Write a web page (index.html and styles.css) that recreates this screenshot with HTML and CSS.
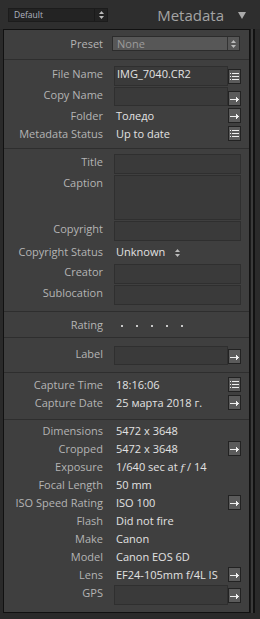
FILE: index.html
```html
<!DOCTYPE html>
<html lang="en">
<head>
    <meta charset="UTF-8">
    <meta name="viewport" content="width=device-width, initial-scale=1.0">
    <title>Metadata</title>
    <link rel="stylesheet" href="styles.css">
</head>
<body>
    <div class="header">
        <div class="mini-select">
            <span class="mini-text">Default</span>
            <span class="mini-spin"><i class="spin"></i></span>
        </div>
        <div class="title">Metadata</div>
        <div class="collapse"></div>
    </div>

    <div class="frame">
        <div class="panel">
            <div class="group g-preset">
                <div class="row">
                    <div class="label">Preset</div>
                    <div class="preset-select">
                        <span class="preset-text">None</span>
                        <span class="preset-spin"><i class="spin"></i></span>
                    </div>
                </div>
            </div>

            <div class="group g-file">
                <div class="row box-row">
                    <div class="label">File Name</div>
                    <div class="box short">IMG_7040.CR2</div>
                    <button class="btn list"></button>
                </div>
                <div class="row box-row copy">
                    <div class="label">Copy Name</div>
                    <div class="box short"></div>
                    <button class="btn arrow"></button>
                </div>
                <div class="row">
                    <div class="label">Folder</div>
                    <div class="value">Толедо</div>
                    <button class="btn arrow"></button>
                </div>
                <div class="row">
                    <div class="label">Metadata Status</div>
                    <div class="value">Up to date</div>
                    <button class="btn list"></button>
                </div>
            </div>

            <div class="group g-text">
                <div class="row box-row">
                    <div class="label">Title</div>
                    <div class="box"></div>
                </div>
                <div class="row box-row caption">
                    <div class="label">Caption</div>
                    <div class="box"></div>
                </div>
                <div class="row box-row">
                    <div class="label">Copyright</div>
                    <div class="box"></div>
                </div>
                <div class="row status-row">
                    <div class="label">Copyright Status</div>
                    <div class="value">Unknown <i class="spin"></i></div>
                </div>
                <div class="row box-row creator">
                    <div class="label">Creator</div>
                    <div class="box"></div>
                </div>
                <div class="row box-row">
                    <div class="label">Sublocation</div>
                    <div class="box"></div>
                </div>
            </div>

            <div class="group g-rating">
                <div class="row">
                    <div class="label">Rating</div>
                    <div class="stars">
                        <span></span><span></span><span></span><span></span><span></span>
                    </div>
                </div>
            </div>

            <div class="group g-label">
                <div class="row box-row">
                    <div class="label">Label</div>
                    <div class="box short"></div>
                    <button class="btn arrow"></button>
                </div>
            </div>

            <div class="group g-capture">
                <div class="row">
                    <div class="label">Capture Time</div>
                    <div class="value">18:16:06</div>
                    <button class="btn list"></button>
                </div>
                <div class="row">
                    <div class="label">Capture Date</div>
                    <div class="value">25 марта 2018 г.</div>
                    <button class="btn arrow"></button>
                </div>
            </div>

            <div class="group g-exif">
                <div class="row">
                    <div class="label">Dimensions</div>
                    <div class="value">5472 x 3648</div>
                </div>
                <div class="row">
                    <div class="label">Cropped</div>
                    <div class="value">5472 x 3648</div>
                    <button class="btn arrow"></button>
                </div>
                <div class="row">
                    <div class="label">Exposure</div>
                    <div class="value">1/640 sec at <i class="fnum">f</i> / 14</div>
                </div>
                <div class="row">
                    <div class="label">Focal Length</div>
                    <div class="value">50 mm</div>
                </div>
                <div class="row">
                    <div class="label">ISO Speed Rating</div>
                    <div class="value">ISO 100</div>
                    <button class="btn arrow"></button>
                </div>
                <div class="row">
                    <div class="label">Flash</div>
                    <div class="value">Did not fire</div>
                </div>
                <div class="row">
                    <div class="label">Make</div>
                    <div class="value">Canon</div>
                </div>
                <div class="row">
                    <div class="label">Model</div>
                    <div class="value">Canon EOS 6D</div>
                </div>
                <div class="row">
                    <div class="label">Lens</div>
                    <div class="value">EF24-105mm f/4L IS</div>
                    <button class="btn arrow"></button>
                </div>
                <div class="row box-row gps">
                    <div class="label">GPS</div>
                    <div class="box short"></div>
                    <button class="btn arrow"></button>
                </div>
            </div>
        </div>
        <div class="rail"></div>
    </div>
</body>
</html>
```

FILE: styles.css
```css
* {
    box-sizing: border-box;
}
body {
    margin: 0;
    background-color: #2a2a2a;
    font-family: "Open Sans", "Noto Sans", sans-serif;
    font-size: 11px;
    color: #b4b4b4;
}
.header {
    height: 29px;
    display: flex;
    align-items: flex-start;
    background-color: #2e2e2e;
}
.mini-select {
    margin: 8px 0 0 8px;
    width: 100px;
    height: 14px;
    border: 1px solid #1c1c1c;
    background-color: #232323;
    display: flex;
    justify-content: space-between;
    font-size: 8.5px;
    line-height: 12px;
    color: #b0b4c0;
}
.mini-text {
    padding-left: 5px;
}
.mini-spin {
    width: 13px;
    border-left: 1px solid #1a1a1a;
    display: flex;
    align-items: center;
    justify-content: center;
}
.title {
    margin: 5px 0 0 auto;
    font-size: 15px;
    line-height: 20px;
    color: #a4a4a4;
}
.collapse {
    margin: 12px 14px 0 14px;
    width: 0;
    height: 0;
    border-left: 4.5px solid transparent;
    border-right: 4.5px solid transparent;
    border-top: 7px solid #aaa;
}
.spin {
    display: inline-block;
    width: 5px;
    height: 8px;
    background-image: url("data:image/svg+xml;utf8,<svg xmlns='http://www.w3.org/2000/svg' width='5' height='8'><g fill='%23bbbbbb'><polygon points='0,3 2.5,0 5,3'/><polygon points='0,5 2.5,8 5,5'/></g></svg>");
}
.frame {
    display: flex;
    margin-left: 3px;
}
.panel {
    width: 247px;
    border: 1px solid #111;
    background-color: #3f3f3f;
}
.rail {
    width: 5px;
    background-color: #3a3a3a;
    border-left: 1px solid #1a1a1a;
    border-right: 2px solid #111;
}
.group {
    border-top: 1px solid #2e2e2e;
}
.group:first-child {
    border-top: none;
}
.row {
    display: grid;
    grid-template-columns: 110px 114px 13px;
    align-items: start;
    height: 18px;
}
.label {
    text-align: right;
    line-height: 18px;
    padding-right: 11px;
    white-space: nowrap;
}
.value {
    grid-column: 2;
    line-height: 18px;
    padding-left: 2px;
    color: #e2e2e2;
    white-space: nowrap;
}
.value .spin {
    margin-left: 7px;
    vertical-align: -1px;
}
.fnum {
    font-family: "DejaVu Serif", serif;
    font-size: 10px;
}
.btn {
    grid-column: 3;
    width: 13px;
    height: 15px;
    margin: 1px 0 0;
    padding: 0;
    border: 1px solid #222;
    background-color: #5b5b5b;
    background-repeat: no-repeat;
    background-position: center;
}
.btn.list {
    background-image: url("data:image/svg+xml;utf8,<svg xmlns='http://www.w3.org/2000/svg' width='11' height='13'><g fill='%23eeeeee'><rect x='1' y='3' width='1' height='1'/><rect x='1' y='6' width='1' height='1'/><rect x='1' y='9' width='1' height='1'/><rect x='3' y='3' width='7' height='1'/><rect x='3' y='6' width='7' height='1'/><rect x='3' y='9' width='7' height='1'/></g></svg>");
}
.btn.arrow {
    background-image: url("data:image/svg+xml;utf8,<svg xmlns='http://www.w3.org/2000/svg' width='11' height='13'><g fill='%23eeeeee'><rect x='1' y='7' width='8' height='1'/><rect x='7' y='5' width='1' height='5'/><rect x='8' y='6' width='1' height='3'/><rect x='9' y='7' width='1' height='1'/></g></svg>");
}

/* input style boxes */
.box-row {
    height: 21px;
}
.box-row .label {
    line-height: 16px;
}
.box {
    grid-column: 2 / 4;
    height: 20px;
    border: 1px solid #2f2f2f;
    background-color: #3a3a3a;
    padding-left: 2px;
    line-height: 14px;
    color: #e2e2e2;
}
.box.short {
    grid-column: 2;
}
.box-row .btn {
    margin-top: 3px;
}
.caption {
    height: 46px;
}
.caption .box {
    height: 45px;
}
.copy {
    height: 20px;
}
.copy .box {
    height: 19px;
}
.copy .btn {
    margin-top: 4px;
}

.g-preset {
    padding: 6px 0 8px;
}
.g-preset .row {
    height: 15px;
}
.g-preset .label {
    line-height: 15px;
}
.preset-select {
    grid-column: 2 / 4;
    margin-left: -2px;
    width: 128px;
    height: 15px;
    border: 1px solid #2c2c2c;
    background-color: #575757;
    display: flex;
    justify-content: space-between;
    line-height: 13px;
    color: #9c9c9c;
}
.preset-text {
    padding-left: 4px;
}
.preset-spin {
    width: 12px;
    border-left: 1px solid #333;
    display: flex;
    align-items: center;
    justify-content: center;
}

.g-file {
    padding: 6px 0 5px;
}
.g-text {
    padding: 5px 0 5px;
}
.status-row {
    height: 21px;
    padding-top: 1px;
}
.creator {
    margin-top: 1px;
}
.g-rating .row {
    height: 25px;
    align-items: center;
}
.g-rating .label {
    line-height: 25px;
}
.stars {
    grid-column: 2 / 4;
    display: flex;
    gap: 13px;
    padding: 2px 0 0 7px;
}
.stars span {
    width: 2px;
    height: 2px;
    background-color: #c8c8c8;
}
.g-label {
    padding: 8px 0 7px;
}
.g-label .row {
    height: 19px;
}
.g-label .box {
    height: 19px;
}
.g-capture {
    padding: 3px 0 7px;
}
.g-exif {
    padding: 2px 0 7px;
}
.gps {
    margin-top: 1px;
    height: 20px;
}
```
